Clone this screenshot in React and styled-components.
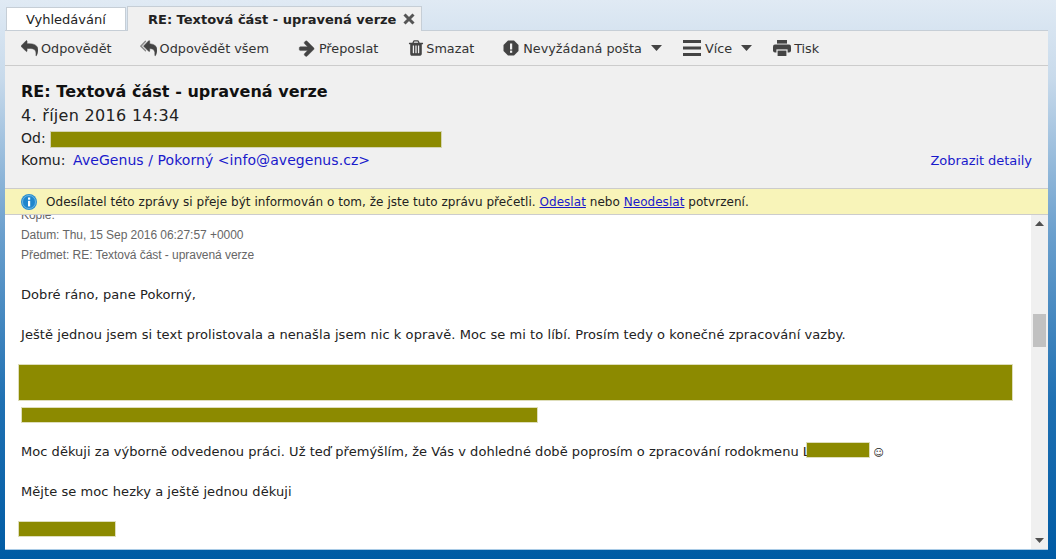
import React from 'react';
import styled, { createGlobalStyle } from 'styled-components';

const Global = createGlobalStyle`
    html, body {
        margin: 0;
        height: 100%;
    }
    body {
        overflow: hidden;
        font-family: "DejaVu Sans", Verdana, sans-serif;
        font-size: 13px;
        color: #222;
    }
`;
const Page = styled.div`
    width: 1056px;
    height: 559px;
    box-sizing: border-box;
    padding: 7px 8px 9px 5px;
    display: flex;
    flex-direction: column;
    background: linear-gradient(to bottom, #e0eaf4 0%, #c8daeb 14%, #6a9fcd 42%, #1f70b2 72%, #005ba4 100%);
`;
const Tabs = styled.div`
    display: flex;
    flex: none;
    height: 23px;
`;
const Tab = styled.div`
    display: flex;
    align-items: center;
    justify-content: space-between;
    box-sizing: border-box;
    font-size: 13px;
    white-space: nowrap;
    border: 1px solid #c6ced6;
    border-bottom: none;
`;
const SearchTab = styled(Tab)`
    width: 120px;
    height: 23px;
    margin-left: 1px;
    padding-left: 19px;
    background: #fff;
`;
const ActiveTab = styled(Tab)`
    position: relative;
    z-index: 1;
    width: 295px;
    height: 25px;
    margin: -1px 0 0 1px;
    padding: 0 6px 0 20px;
    background: #f0f0f0;
    font-weight: bold;
`;
const Panel = styled.div`
    flex: 1;
    min-height: 0;
    display: flex;
    flex-direction: column;
    background: #f0f0f0;
    border-top: 1px solid #c6ced6;
    border-bottom: 1px solid #a9cbe6;
`;
const Toolbar = styled.div`
    display: flex;
    align-items: center;
    height: 34px;
    padding-left: 16px;
    border-bottom: 1px solid #ccc;
    flex: none;
`;
const ToolButton = styled.div`
    display: flex;
    align-items: center;
    gap: ${props => props.$iconGap || 3}px;
    margin-right: ${props => props.$gap}px;
    color: #333;
    font-size: 12.8px;
    white-space: nowrap;
    svg { flex: none; }
`;
const Caret = styled.svg`
    margin-left: 5px;
`;
const Header = styled.div`
    position: relative;
    flex: none;
    height: 123px;
    box-sizing: border-box;
    padding: 16px 16px 0;
    border-bottom: 1px solid #ccc;
`;
const Subject = styled.div`
    font-size: 16px;
    font-weight: bold;
    line-height: 20px;
    letter-spacing: 0.03px;
    color: #111;
`;
const DateLine = styled.div`
    font-size: 16px;
    line-height: 22px;
    margin-top: 3px;
    letter-spacing: 0.3px;
`;
const Meta = styled.div`
    display: flex;
    align-items: baseline;
    justify-content: space-between;
    font-size: 14px;
    line-height: 22px;
    letter-spacing: 0.06px;
`;
const PersonLink = styled.span`
    color: #1a1acb;
    margin-left: 3px;
`;
const DetailsLink = styled.span`
    color: #1a1acb;
    font-size: 13px;
    letter-spacing: -0.05px;
`;
const Notice = styled.div`
    flex: none;
    display: flex;
    align-items: center;
    gap: 9px;
    height: 26px;
    padding-left: 16px;
    box-sizing: border-box;
    background: #f8f4b9;
    border-bottom: 1px solid #ccc;
    font-size: 12px;
    letter-spacing: 0.04px;
    white-space: nowrap;
    a { color: #1a1acb; text-decoration: underline; }
`;
const BodyArea = styled.div`
    flex: 1;
    min-height: 0;
    display: flex;
    background: #fff;
`;
const Message = styled.div`
    position: relative;
    flex: 1;
    overflow: hidden;
    padding-left: 16px;
`;
const Quoted = styled.div`
    margin-top: -10px;
    font-family: "Liberation Sans", Arial, sans-serif;
    font-size: 12px;
    line-height: 20px;
    letter-spacing: -0.05px;
    color: #666;
`;
const Para = styled.p`
    margin: ${props => props.$top}px 0 0;
    line-height: 20px;
    height: 20px;
    letter-spacing: ${props => props.$spacing ?? 0.07}px;
    white-space: nowrap;
    color: #222;
`;
const NameGap = styled.span`
    display: inline-block;
    width: 63px;
`;
const Smiley = styled.span`
    font-size: 10px;
    line-height: 1;
`;
const Redaction = styled.div`
    position: absolute;
    background: #8c8a00;
    box-shadow: 0 0 0 1px rgba(160, 160, 60, 0.35);
`;
const BigRedaction = styled(Redaction)`
    left: 14px;
    top: 150px;
    width: 993px;
    height: 35px;
`;
const LineRedaction = styled(Redaction)`
    left: 17px;
    top: 193px;
    width: 515px;
    height: 14px;
`;
const NameRedaction = styled(Redaction)`
    left: 802px;
    top: 228px;
    width: 62px;
    height: 14px;
`;
const SignRedaction = styled(Redaction)`
    left: 14px;
    top: 307px;
    width: 96px;
    height: 14px;
`;
const FromRedaction = styled(Redaction)`
    left: 46px;
    top: 66px;
    width: 390px;
    height: 15px;
`;
const Scrollbar = styled.div`
    flex: none;
    width: 17px;
    display: flex;
    flex-direction: column;
    align-items: center;
    background: #f0f0f0;
`;
const ScrollArrow = styled.div`
    flex: none;
    height: 17px;
    width: 17px;
    display: flex;
    align-items: center;
    justify-content: center;
`;
const Track = styled.div`
    flex: 1;
    width: 100%;
`;
const Thumb = styled.div`
    width: 13px;
    height: 33px;
    margin: 82px auto 0;
    background: #c1c1c1;
`;

const ICON = '#444';

const Glyph = ({ size = 17, d, bold = 0 }) => (
    <svg width={size} height={size} viewBox="0 0 1792 1792">
        <path d={d} fill={ICON} stroke={ICON} strokeWidth={bold} />
    </svg>
);

const REPLY = 'M1792 1120q0 166-127 451-3 7-10.5 24t-13.5 30-13 22q-12 17-28 17-15 0-23.5-10t-8.5-25q0-9 2.5-26.5t2.5-23.5q5-68 5-123 0-101-17.5-181t-48.5-138.5-80-101-105.5-69.5-133-42.5-154-21.5-175.5-6h-224v256q0 26-19 45t-45 19-45-19l-512-512q-19-19-19-45t19-45l512-512q19-19 45-19t45 19 19 45v256h224q713 0 875 403 53 134 53 333z';
const REPLY_BACK = 'M640 1082v70q0 42-39 59-13 5-25 5-27 0-45-19l-512-512q-19-19-19-45t19-45l512-512q29-31 70-14 39 17 39 59v69l-397 398q-19 19-19 45t19 45z';
const REPLY_FRONT = 'M1792 1120q0 58-17 133.5t-38.5 138-48 125-40.5 90.5l-20 40q-8 17-28 17-6 0-9-1-25-8-23-34 43-400-106-565-64-71-170.5-110.5t-267.5-52.5v251q0 42-39 59-13 5-25 5-27 0-45-19l-512-512q-19-19-19-45t19-45l512-512q29-31 70-14 39 17 39 59v262q411 28 599 221 169 173 169 509z';
const ARROW = 'M1600 960q0 54-37 91l-651 651q-39 37-91 37-51 0-90-37l-75-75q-38-38-38-91t38-91l293-293h-704q-52 0-84.5-37.5t-32.5-90.5v-128q0-53 32.5-90.5t84.5-37.5h704l-293-294q-38-36-38-90t38-90l75-75q38-38 90-38 53 0 91 38l651 651q37 35 37 90z';
const TRASH = 'M704 1376v-704q0-14-9-23t-23-9h-64q-14 0-23 9t-9 23v704q0 14 9 23t23 9h64q14 0 23-9t9-23zm256 0v-704q0-14-9-23t-23-9h-64q-14 0-23 9t-9 23v704q0 14 9 23t23 9h64q14 0 23-9t9-23zm256 0v-704q0-14-9-23t-23-9h-64q-14 0-23 9t-9 23v704q0 14 9 23t23 9h64q14 0 23-9t9-23zm-544-992h448l-48-117q-7-9-17-11h-317q-10 2-17 11zm928 32v64q0 14-9 23t-23 9h-96v948q0 83-47 143.5t-113 60.5h-832q-66 0-113-58.5t-47-141.5v-952h-96q-14 0-23-9t-9-23v-64q0-14 9-23t23-9h309l70-167q15-37 54-63t79-26h320q40 0 79 26t54 63l70 167h309q14 0 23 9t9 23z';

const ReplyAllIcon = () => (
    <svg width="17" height="17" viewBox="0 0 1792 1792">
        <path d={REPLY_BACK} fill="#8a8a8a" />
        <path d={REPLY_FRONT} fill={ICON} stroke={ICON} strokeWidth="50" />
    </svg>
);

const SpamIcon = () => (
    <svg width="16" height="16" viewBox="0 0 16 16">
        <polygon points="5,0.5 11,0.5 15.5,5 15.5,11 11,15.5 5,15.5 0.5,11 0.5,5" fill={ICON} />
        <rect x="7" y="3.5" width="2.2" height="6" fill="#f0f0f0" />
        <rect x="7" y="10.6" width="2.2" height="2.2" fill="#f0f0f0" />
    </svg>
);

const BarsIcon = () => (
    <svg width="18" height="16" viewBox="0 0 18 16">
        <rect y="0" width="18" height="3" fill={ICON} />
        <rect y="6.5" width="18" height="3" fill={ICON} />
        <rect y="13" width="18" height="3" fill={ICON} />
    </svg>
);

const PrintIcon = () => (
    <svg width="18" height="16" viewBox="0 0 18 16">
        <rect x="4" y="0" width="10" height="3.6" fill={ICON} />
        <rect x="0" y="4.6" width="18" height="8" rx="2" fill={ICON} />
        <rect x="3.4" y="9.4" width="11.2" height="6.6" fill="#f0f0f0" />
        <rect x="4.6" y="10.6" width="8.8" height="5.4" fill={ICON} />
    </svg>
);

const CloseIcon = () => (
    <svg width="12" height="12" viewBox="0 0 12 12">
        <path d="M1.5 1.5 L10.5 10.5 M10.5 1.5 L1.5 10.5" stroke="#555" strokeWidth="3" />
    </svg>
);

const CaretIcon = () => (
    <Caret width="11" height="6" viewBox="0 0 11 6">
        <polygon points="0,0 11,0 5.5,6" fill={ICON} />
    </Caret>
);

const InfoIcon = () => (
    <svg width="16" height="16" viewBox="0 0 16 16">
        <circle cx="8" cy="8" r="8" fill="#2a8fd0" />
        <circle cx="8" cy="8" r="6.5" fill="#1f86cc" stroke="#7cc0ea" strokeWidth="0.8" />
        <rect x="7" y="3.5" width="2.2" height="2.2" fill="#fff" />
        <rect x="7" y="6.8" width="2.2" height="5.6" fill="#fff" />
    </svg>
);

const Triangle = ({ up }) => (
    <svg width="9" height="5" viewBox="0 0 9 5">
        <polygon points={up ? '4.5,0 9,5 0,5' : '0,0 9,0 4.5,5'} fill="#505050" />
    </svg>
);

export default function App() {
    return (
        <Page>
            <Global />
            <Tabs>
                <SearchTab>Vyhledávání</SearchTab>
                <ActiveTab>
                    RE: Textová část - upravená verze
                    <CloseIcon />
                </ActiveTab>
            </Tabs>
            <Panel>
                <Toolbar>
                    <ToolButton $gap={28}><Glyph d={REPLY} bold={50} />Odpovědět</ToolButton>
                    <ToolButton $gap={29}><ReplyAllIcon />Odpovědět všem</ToolButton>
                    <ToolButton $gap={29}><Glyph size={18} d={ARROW} bold={40} />Přeposlat</ToolButton>
                    <ToolButton $gap={29} $iconGap={1}><Glyph size={18} d={TRASH} />Smazat</ToolButton>
                    <ToolButton $gap={21} $iconGap={4}><SpamIcon />Nevyžádaná pošta<CaretIcon /></ToolButton>
                    <ToolButton $gap={21} $iconGap={4}><BarsIcon />Více<CaretIcon /></ToolButton>
                    <ToolButton $gap={0}><PrintIcon />Tisk</ToolButton>
                </Toolbar>
                <Header>
                    <Subject>RE: Textová část - upravená verze</Subject>
                    <DateLine>4. říjen 2016 14:34</DateLine>
                    <Meta><span>Od:</span></Meta>
                    <Meta>
                        <span>Komu:<PersonLink> AveGenus / Pokorný &lt;info@avegenus.cz&gt;</PersonLink></span>
                        <DetailsLink>Zobrazit detaily</DetailsLink>
                    </Meta>
                    <FromRedaction />
                </Header>
                <Notice>
                    <InfoIcon />
                    <span>Odesílatel této zprávy si přeje být informován o tom, že jste tuto zprávu přečetli. <a>Odeslat</a> nebo <a>Neodeslat</a> potvrzení.</span>
                </Notice>
                <BodyArea>
                    <Message>
                        <Quoted>
                            <div>Kopie:</div>
                            <div>Datum: Thu, 15 Sep 2016 06:27:57 +0000</div>
                            <div>Předmet: RE: Textová část - upravená verze</div>
                        </Quoted>
                        <Para $top={20}>Dobré ráno, pane Pokorný,</Para>
                        <Para $top={20}>Ještě jednou jsem si text prolistovala a nenašla jsem nic k opravě. Moc se mi to líbí. Prosím tedy o konečné zpracování vazby.</Para>
                        <Para $top={97} $spacing={0.035}>Moc děkuji za výborně odvedenou práci. Už teď přemýšlím, že Vás v dohledné době poprosím o zpracování rodokmenu L<NameGap /><Smiley>☺</Smiley></Para>
                        <Para $top={20}>Mějte se moc hezky a ještě jednou děkuji</Para>
                        <BigRedaction />
                        <LineRedaction />
                        <NameRedaction />
                        <SignRedaction />
                    </Message>
                    <Scrollbar>
                        <ScrollArrow><Triangle up /></ScrollArrow>
                        <Track><Thumb /></Track>
                        <ScrollArrow><Triangle /></ScrollArrow>
                    </Scrollbar>
                </BodyArea>
            </Panel>
        </Page>
    );
}
